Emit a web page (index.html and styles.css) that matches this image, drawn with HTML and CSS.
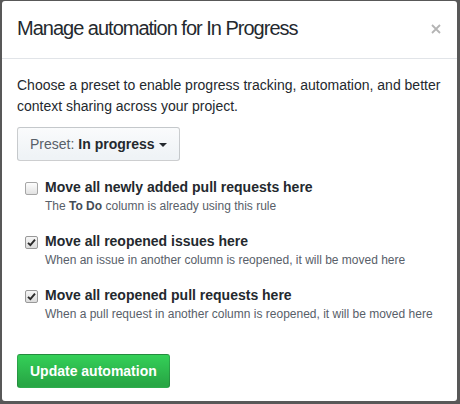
FILE: index.html
```html
<!DOCTYPE html>
<html>
<head>
<meta charset="utf-8">
<link rel="stylesheet" href="styles.css">
</head>
<body>
<div class="modal">
  <div class="modal-header">
    <h2 class="modal-title">Manage automation for In Progress</h2>
    <button class="close" aria-label="Close">
      <svg width="10" height="10" viewBox="0 0 10 10"><path d="M1 1L9 9M9 1L1 9" stroke="#b4b4b4" stroke-width="1.8" fill="none"/></svg>
    </button>
  </div>
  <div class="modal-body">
    <p class="intro">Choose a preset to enable progress tracking, automation, and better context sharing across your project.</p>
    <button class="btn preset">Preset: <strong>In progress</strong> <span class="caret"></span></button>
    <ul class="options">
      <li class="option">
        <span class="check"></span>
        <div class="option-text">
          <div class="option-label">Move all newly added pull requests here</div>
          <div class="note">The <strong>To Do</strong> column is already using this rule</div>
        </div>
      </li>
      <li class="option">
        <span class="check checked"><svg width="9" height="9" viewBox="0 0 9 9"><path d="M1 4.8L3.4 7.2L8 1.6" stroke="#2b2b2b" stroke-width="1.9" fill="none"/></svg></span>
        <div class="option-text">
          <div class="option-label">Move all reopened issues here</div>
          <div class="note">When an issue in another column is reopened, it will be moved here</div>
        </div>
      </li>
      <li class="option">
        <span class="check checked"><svg width="9" height="9" viewBox="0 0 9 9"><path d="M1 4.8L3.4 7.2L8 1.6" stroke="#2b2b2b" stroke-width="1.9" fill="none"/></svg></span>
        <div class="option-text">
          <div class="option-label">Move all reopened pull requests here</div>
          <div class="note">When a pull request in another column is reopened, it will be moved here</div>
        </div>
      </li>
    </ul>
    <button class="btn btn-primary">Update automation</button>
  </div>
</div>
</body>
</html>
```
FILE: styles.css
```css
html, body {
  margin: 0;
  padding: 0;
}
body {
  background: #585858;
  width: 460px;
  height: 404px;
  overflow: hidden;
  font-family: "Liberation Sans", Arial, sans-serif;
  color: #24292e;
  font-size: 14px;
  line-height: 1.5;
  padding: 1px 3px 3px 2px;
  box-sizing: border-box;
}
.modal {
  width: 455px;
  height: 400px;
  background: #fff;
  border-radius: 3px;
  box-sizing: border-box;
}
.modal-header {
  display: flex;
  align-items: center;
  justify-content: space-between;
  padding: 12px 16px 15px 15px;
  border-bottom: 1px solid #e1e4e8;
}
.modal-title {
  margin: 0;
  font-size: 20px;
  font-weight: normal;
  line-height: 30px;
  letter-spacing: -1px;
}
.close {
  border: 0;
  background: none;
  padding: 0;
  margin-top: 2px;
  margin-right: 0;
  width: 10px;
  height: 10px;
  display: flex;
}
.modal-body {
  padding: 16px 15px 14px 15px;
}
.intro {
  margin: 0 0 10px;
  line-height: 21px;
}
.btn {
  font-family: inherit;
  font-size: 14px;
  line-height: 20px;
  padding: 6px 12px;
  border: 1px solid rgba(27, 31, 35, 0.2);
  border-radius: 3px;
  height: 34px;
  box-sizing: border-box;
  display: inline-flex;
  align-items: center;
  white-space: nowrap;
}
.preset {
  color: #586069;
  background: linear-gradient(#fafbfc, #eff3f6 90%);
  gap: 4px;
}
.preset strong {
  color: #24292e;
  font-weight: bold;
}
.caret {
  display: inline-block;
  width: 0;
  height: 0;
  border-top: 4px solid #24292e;
  border-left: 4px solid transparent;
  border-right: 4px solid transparent;
  margin-left: 0;
  margin-top: 2px;
}
.options {
  list-style: none;
  margin: 16px 0 31px;
  padding: 0 0 0 8px;
  display: flex;
  flex-direction: column;
  gap: 16px;
}
.option {
  display: flex;
  gap: 7px;
  align-items: flex-start;
}
.check {
  width: 13px;
  height: 13px;
  box-sizing: border-box;
  border: 1px solid #a6a6a6;
  border-radius: 2px;
  background: linear-gradient(#fdfdfd, #e2e2e2);
  margin-top: 5px;
  flex: none;
  display: flex;
  align-items: center;
  justify-content: center;
}
.check.checked {
  background: linear-gradient(#f6f6f6, #dcdcdc);
  border-color: #999;
}
.option-label {
  font-weight: bold;
  line-height: 20px;
}
.note {
  font-size: 12px;
  line-height: 18px;
  color: #586069;
}
.note strong {
  color: #444d56;
}
.btn-primary {
  color: #fff;
  font-weight: bold;
  background: linear-gradient(#34d058, #28a745 90%);
  border-color: rgba(27, 31, 35, 0.2);
}
```
